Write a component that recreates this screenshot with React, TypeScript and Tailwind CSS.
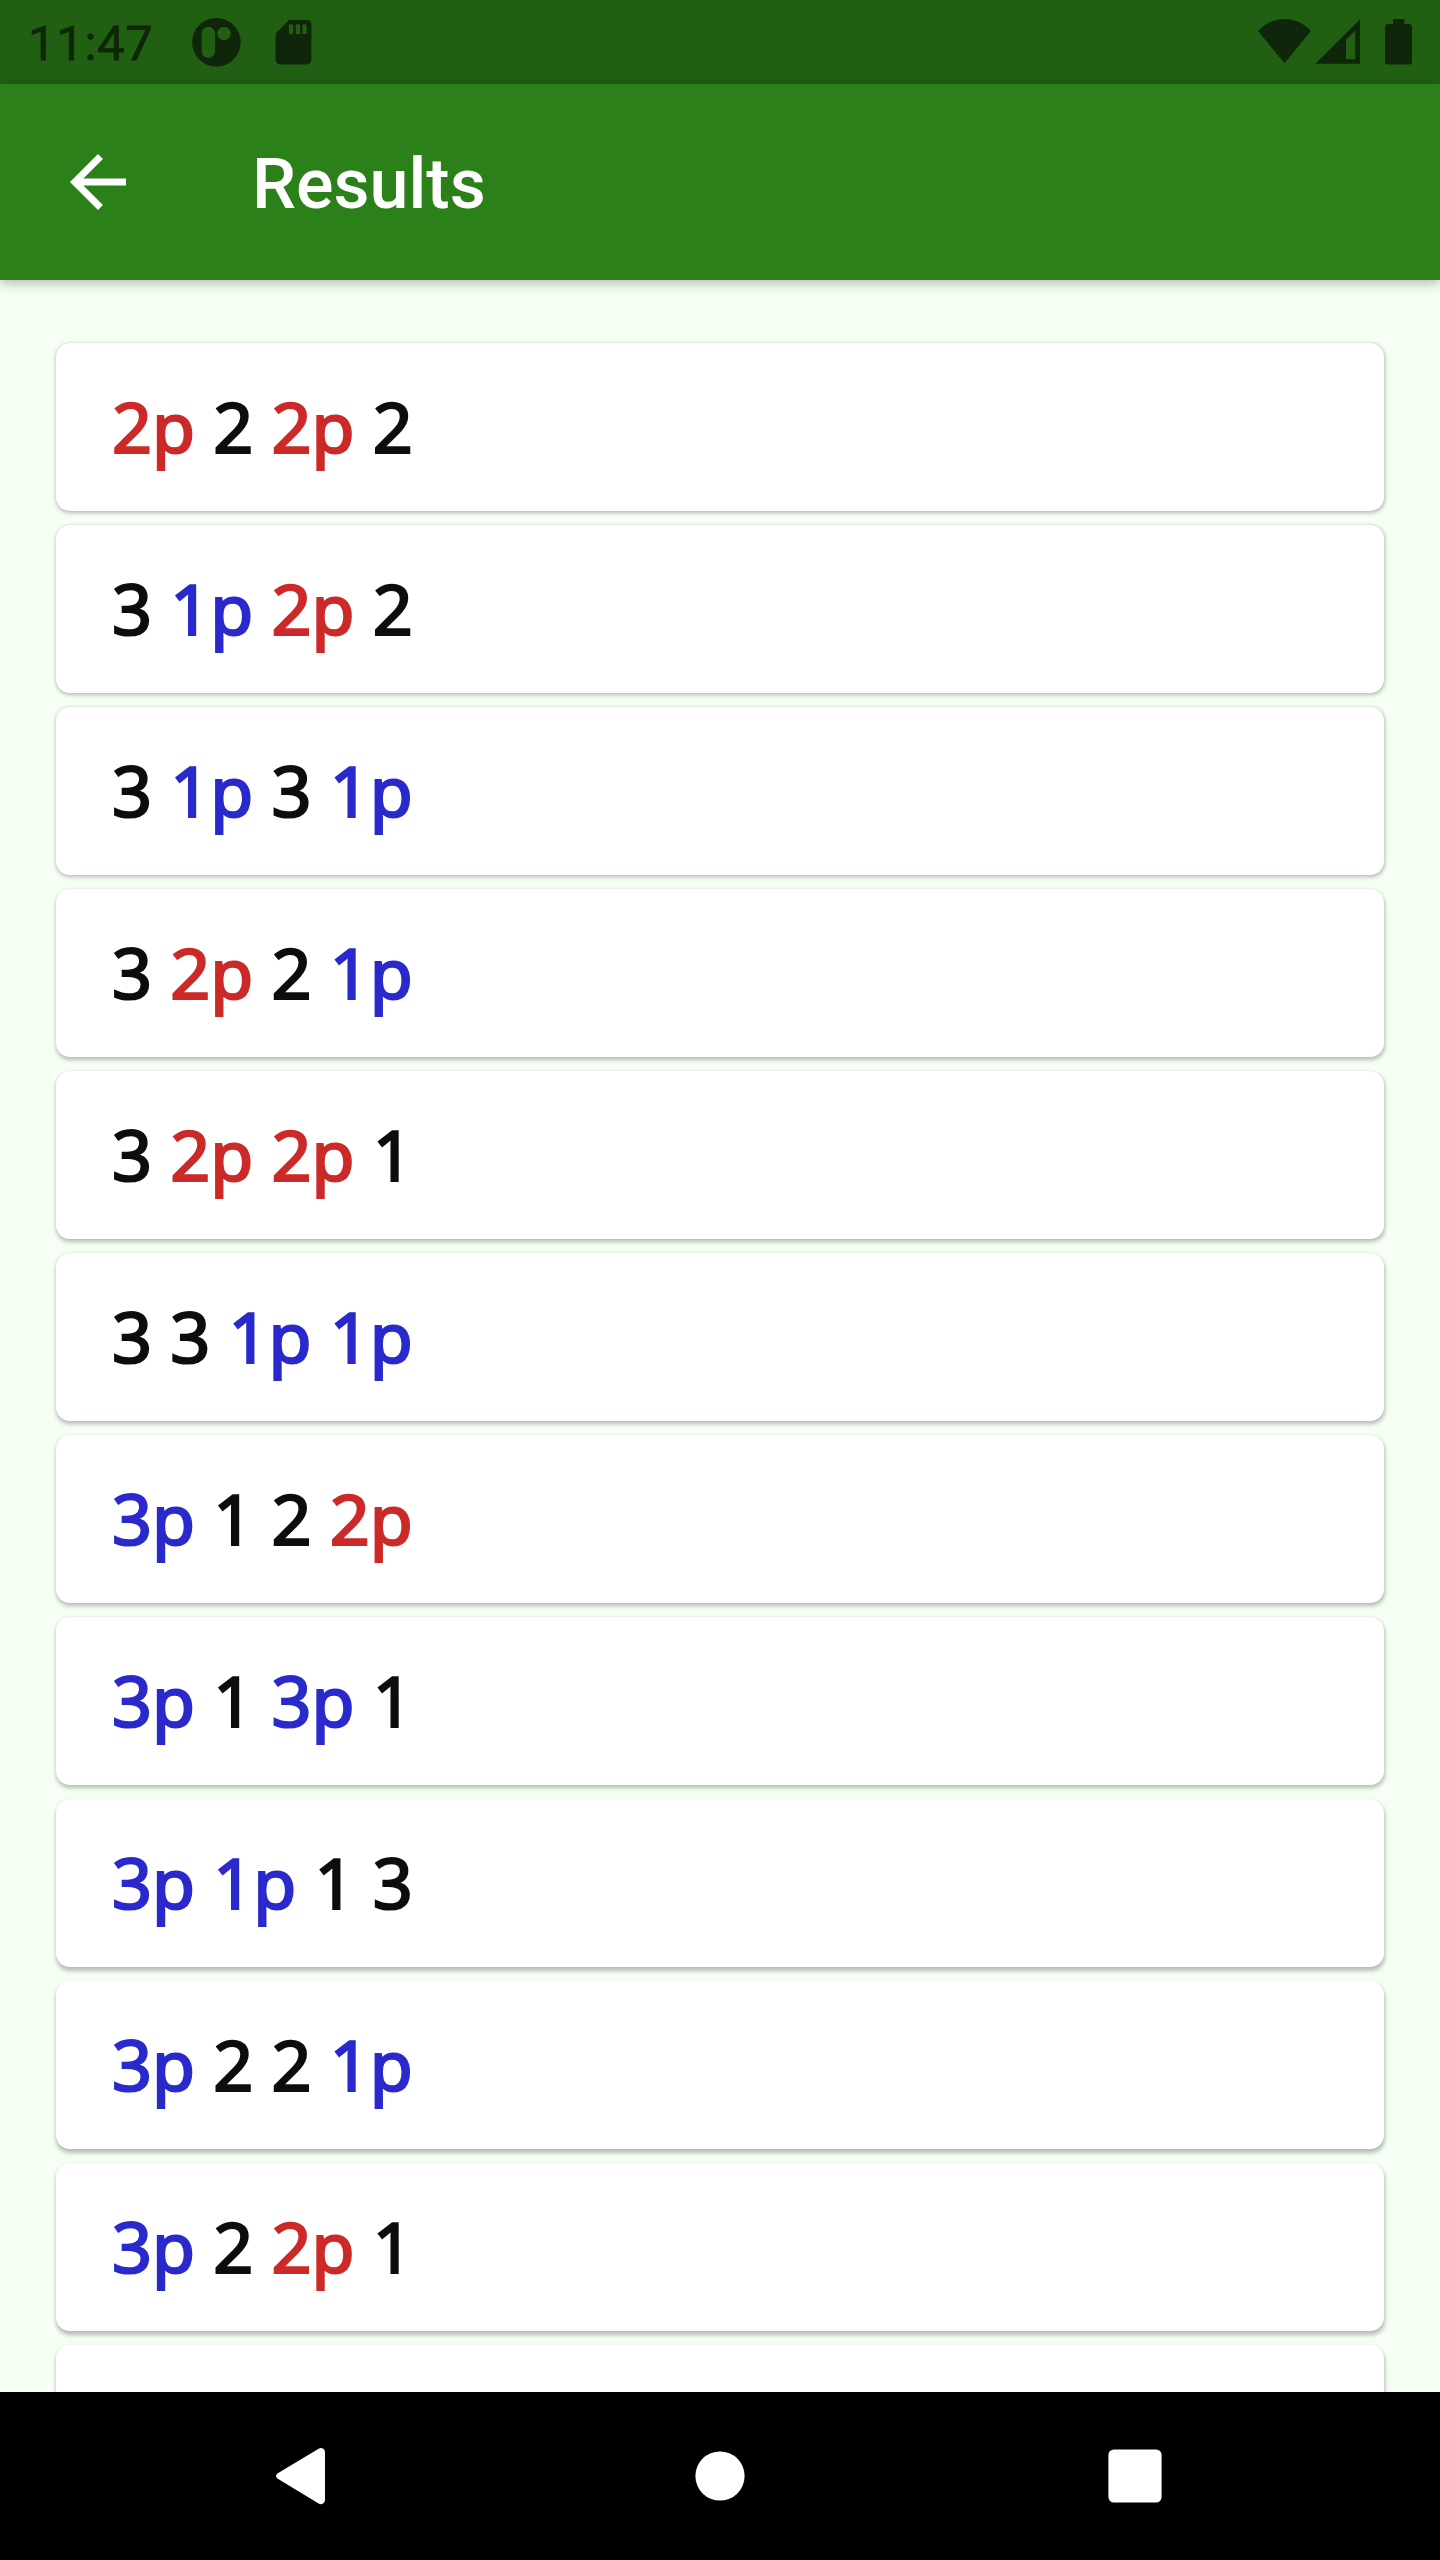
const ROWS = [
  '2p 2 2p 2',
  '3 1p 2p 2',
  '3 1p 3 1p',
  '3 2p 2 1p',
  '3 2p 2p 1',
  '3 3 1p 1p',
  '3p 1 2 2p',
  '3p 1 3p 1',
  '3p 1p 1 3',
  '3p 2 2 1p',
  '3p 2 2p 1',
  '',
];

function tokenColor(token: string) {
  if (!token.endsWith('p')) return 'text-[#0d0d0d]';
  return token === '2p' ? 'text-[#cc2929]' : 'text-[#2929cc]';
}

function StatusBar() {
  return (
    <div className="flex h-[84px] shrink-0 items-center justify-between bg-[#216013] text-[#0f260a]">
      <div className="flex h-full items-center pl-7">
        <span className="w-[164px] font-['Roboto',sans-serif] text-[49px] leading-[84px] tracking-[0.7px] [-webkit-text-stroke-width:0.8px] [translate:0_2px]">
          11:47
        </span>
        <svg className="h-[84px] w-[160px]" viewBox="192 0 160 84" fill="currentColor">
          <path
            fillRule="evenodd"
            d="M216.4 18a24.3 24.3 0 1 0 0 48.6 24.3 24.3 0 0 0 0-48.6ZM208.4 26.7a6.7 6.7 0 0 1 6.7 6.7V51.3a6.7 6.7 0 0 1-13.4 0V33.4a6.7 6.7 0 0 1 6.7-6.7ZM224 26.7a6.7 6.7 0 1 1 0 13.4 6.7 6.7 0 0 1 0-13.4Z"
          />
          <path
            fillRule="evenodd"
            d="M289 20H307a4.4 4.4 0 0 1 4.4 4.4V60a4.4 4.4 0 0 1-4.4 4.4H280a4.4 4.4 0 0 1-4.4-4.4V33.4ZM289 24.6V34h4.2V24.6ZM295.8 24.6V34h4.2V24.6ZM302.4 24.6V34h4.2V24.6Z"
          />
        </svg>
      </div>
      <svg className="h-[84px] w-[190px]" viewBox="1250 0 190 84" fill="currentColor">
        <path d="M1258 31Q1269 19 1284.5 19T1311 31L1284.5 63.3Z" />
        <path fillRule="evenodd" d="M1360 19.3V63.7H1315.3ZM1355.2 30.6L1346 39.8V59.3H1355.2Z" />
        <path d="M1393 19H1404.3V24H1408.8a3.2 3.2 0 0 1 3.2 3.2V61.4a3.2 3.2 0 0 1-3.2 3.2H1388.2a3.2 3.2 0 0 1-3.2-3.2V27.2a3.2 3.2 0 0 1 3.2-3.2H1393Z" />
      </svg>
    </div>
  );
}

function AppBar() {
  return (
    <header className="z-10 flex h-[196px] shrink-0 items-center bg-[#2c801a] pl-14 text-white shadow-[0_4px_14px_rgba(0,0,0,0.2),0_1px_7px_rgba(0,0,0,0.12)]">
      <svg className="size-[84px]" viewBox="0 0 24 24" fill="currentColor">
        <path d="M20 11H7.83l5.59-5.59L12 4l-8 8 8 8 1.41-1.41L7.83 13H20v-2z" />
      </svg>
      <h1 className="ml-28 font-['Roboto',sans-serif] text-[70px] leading-[84px] font-medium [translate:0_2px]">
        Results
      </h1>
    </header>
  );
}

function ResultCard({ text, index }: { text: string; index: number }) {
  const drop = 1.5 + index * 0.2;
  return (
    <li
      className="flex h-[168px] shrink-0 items-center rounded-[14px] bg-white px-14"
      style={{
        boxShadow: `0.5px ${drop}px 4px rgba(0,0,0,0.26), 0 0 2px rgba(0,0,0,0.06)`,
      }}
    >
      <p className="font-['Noto_Sans',sans-serif] text-[70px] leading-[96px] whitespace-pre [-webkit-text-stroke-width:2.2px] [translate:0_-1px]">
        {text.split(' ').map((token, i) => (
          <span key={i} className={tokenColor(token)}>
            {i > 0 ? ' ' : ''}
            {token}
          </span>
        ))}
      </p>
    </li>
  );
}

function NavBar() {
  return (
    <nav className="z-10 h-[168px] shrink-0 bg-black text-white">
      <svg className="h-[168px] w-[1440px]" viewBox="0 2392 1440 168" fill="currentColor">
        <path d="M277.4 2473.6L318.6 2448.8Q321 2447.4 323 2448.6Q325 2449.8 325 2452.4V2499.8Q325 2502.4 323 2503.6Q321 2504.8 318.6 2503.4L277.4 2478.6Q276 2477.4 276 2476.1T277.4 2473.6Z" />
        <circle cx="720" cy="2476" r="24.6" />
        <rect x="1108.4" y="2449.4" width="53.2" height="53.2" rx="5.5" />
      </svg>
    </nav>
  );
}

export default function App() {
  return (
    <div className="flex h-[2560px] w-[1440px] flex-col overflow-hidden bg-[#f5fff4]">
      <StatusBar />
      <AppBar />
      <ul className="flex min-h-0 flex-1 flex-col gap-[14px] overflow-hidden px-14 pt-[63px]">
        {ROWS.map((row, i) => (
          <ResultCard key={i} text={row} index={i} />
        ))}
      </ul>
      <NavBar />
    </div>
  );
}
